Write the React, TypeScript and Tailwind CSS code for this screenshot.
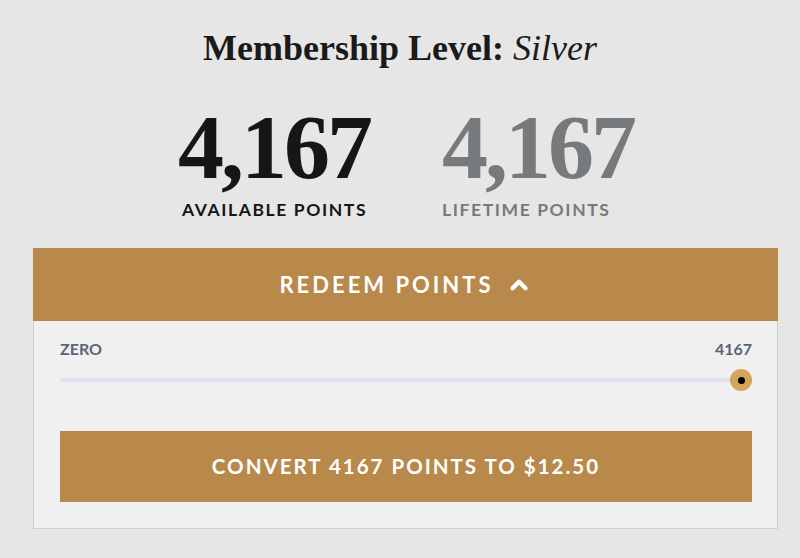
import { ChevronUp } from 'lucide-react';

export default function App() {
  const available = 4167;
  const lifetime = 4167;

  return (
    <div className="min-h-[558px] w-[800px] bg-[#e6e6e6] pt-[26px] font-['Lato',sans-serif]">
      <h1 className="text-center font-['Liberation_Serif',serif] text-[36px] leading-[44px] text-[#1a1a1a]">
        <span className="font-bold">Membership Level:</span> <span className="italic">Silver</span>
      </h1>

      <div className="mt-[31px] flex justify-center gap-[72px] pl-[12px]">
        <div className="flex flex-col items-start">
          <div className="font-['Liberation_Serif',serif] text-[92px] font-bold leading-[92px] tracking-[-3px] text-[#141617]">
            {available.toLocaleString('en-US')}
          </div>
          <div className="ml-[4px] mt-[4px] text-[17.5px] font-bold tracking-[1.6px] text-[#141617]">AVAILABLE POINTS</div>
        </div>
        <div className="flex flex-col items-start">
          <div className="font-['Liberation_Serif',serif] text-[92px] font-bold leading-[92px] tracking-[-3px] text-[#777a7c]">
            {lifetime.toLocaleString('en-US')}
          </div>
          <div className="mt-[4px] text-[17.5px] font-bold tracking-[1.6px] text-[#777a7c]">LIFETIME POINTS</div>
        </div>
      </div>

      <div className="ml-[33px] mr-[22px] mt-[25px] border border-[#cfcfcf] bg-[#f0f0f0]">
        <button className="-m-px flex h-[73px] w-[calc(100%+2px)] items-center justify-center gap-[12px] bg-[#b8894a] text-[22px] font-bold tracking-[3px] text-white">
          REDEEM POINTS
          <ChevronUp size={26} strokeWidth={4} />
        </button>

        <div className="pb-[26px] pl-[26px] pr-[25px] pt-[17px]">
          <div className="flex justify-between text-[16px] font-bold text-[#5b6477]">
            <span>ZERO</span>
            <span>4167</span>
          </div>
          <div className="relative mt-[8px] h-[22px]">
            <div className="absolute left-0 right-[10px] top-[9px] h-[4px] rounded-full bg-[#dce3ef]" />
            <div className="absolute right-0 top-0 flex h-[22px] w-[22px] items-center justify-center rounded-full bg-[#d3a45c]">
              <div className="h-[7px] w-[7px] rounded-full bg-black" />
            </div>
          </div>
          <button className="mt-[40px] flex h-[71px] w-full items-center justify-center bg-[#b8894a] text-[20.5px] font-bold tracking-[2px] text-white">
            CONVERT {available} POINTS TO $12.50
          </button>
        </div>
      </div>
    </div>
  );
}
